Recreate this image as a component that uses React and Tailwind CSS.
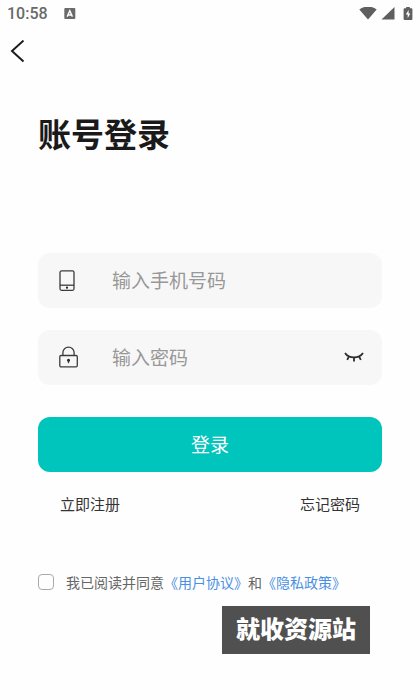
import { useState } from "react";

const StatusBar = () => (
  <div className="flex h-7 items-center justify-between px-[7px] text-[#6a6a6a]">
    <div className="flex items-center gap-4">
      <span className="font-['Roboto',sans-serif] text-base font-medium">
        10:58
      </span>
      <svg width="12" height="12" viewBox="0 0 12 12" aria-hidden="true">
        <rect x="0.3" y="0" width="11" height="11" rx="1" fill="currentColor" />
        <path
          d="M3.2 8.6 5.8 2.8 8.4 8.6M4.2 7H7.4"
          fill="none"
          stroke="#fff"
          strokeWidth="1.4"
        />
      </svg>
    </div>
    <div className="flex items-center gap-1" aria-hidden="true">
      <svg width="18" height="14" viewBox="0 0 18 14" fill="#5f5f5f">
        <path d="M9 12.5 0.3 2.4C2.6 0.6 5.7-0.4 9-0.4s6.4 1 8.7 2.8Z" />
      </svg>
      <svg width="14" height="14" viewBox="0 0 14 14" fill="#5f5f5f">
        <path d="M13.5 0V12.5H0.5Z" />
      </svg>
      <svg className="ml-1" width="10" height="14" viewBox="0 0 10 14">
        <path
          d="M3.2 0h3.6v1.2H8.4a1 1 0 0 1 1 1V12a1 1 0 0 1-1 1H1.6a1 1 0 0 1-1-1V2.2a1 1 0 0 1 1-1H3.2Z"
          fill="#5f5f5f"
        />
        <path d="M5.6 3 2.8 7.6H4.7V11.2L7.3 6.4H5.6Z" fill="#fff" />
      </svg>
    </div>
  </div>
);

const PhoneIcon = () => (
  <svg
    width="20"
    height="24"
    viewBox="0 0 20 24"
    fill="none"
    stroke="#3c3c3c"
    strokeWidth="1.3"
    aria-hidden="true"
  >
    <rect x="2" y="1.9" width="14" height="19.4" rx="1.5" />
    <path d="M2 16.2H16" />
    <circle cx="9" cy="18.7" r="1.1" fill="#222" stroke="none" />
  </svg>
);

const LockIcon = () => (
  <svg
    width="20"
    height="24"
    viewBox="0 0 20 24"
    fill="none"
    stroke="#3c3c3c"
    strokeWidth="1.3"
    aria-hidden="true"
  >
    <rect x="1.8" y="9.5" width="17.5" height="11.3" rx="1.2" />
    <path d="M4.9 9.5V6.4a5.6 5.2 0 0 1 11.2 0V9.5" />
    <circle cx="10.5" cy="14.2" r="1.5" fill="#222" stroke="none" />
    <path d="M10.5 14.2V17.2" strokeWidth="1.2" />
  </svg>
);

const ClosedEyeIcon = () => (
  <svg
    width="20"
    height="12"
    viewBox="0 0 20 12"
    fill="none"
    stroke="#2b2b2b"
    strokeWidth="1.8"
    aria-hidden="true"
  >
    <path d="M1 1C3 4 6.2 5.4 10 5.4S17 4 19 1" />
    <path d="M5 4.3 3.2 7.8M10 5.4V9.6M15 4.3l1.8 3.5" />
  </svg>
);

const App = () => {
  const [form, setForm] = useState({ phone: "", password: "" });
  const [showPassword, setShowPassword] = useState(false);
  const [agreed, setAgreed] = useState(false);

  const handleChange = (e) => {
    setForm({ ...form, [e.target.name]: e.target.value });
  };

  const handleSubmit = (e) => {
    e.preventDefault();
  };

  return (
    <div className="flex min-h-screen flex-col bg-[#fefefe] font-['Noto_Sans_CJK_SC',sans-serif]">
      <StatusBar />

      <header className="flex h-12 items-center px-2">
        <button type="button" aria-label="返回" className="cursor-pointer">
          <svg
            width="20"
            height="24"
            viewBox="0 0 20 24"
            fill="none"
            stroke="#1c1c1c"
            strokeWidth="2"
          >
            <path d="M15.5 0.6 4 11 15.5 21.4" />
          </svg>
        </button>
      </header>

      <main className="flex flex-col px-[38px] pt-8">
        <h1 className="text-[33px] leading-[50px] font-bold text-[#1a1a1a]">
          账号登录
        </h1>

        <form onSubmit={handleSubmit} className="mt-[95px] flex flex-col">
          <div className="flex flex-col gap-[22px]">
            <label className="flex h-[55px] items-center gap-[34px] rounded-xl bg-[#f7f7f7] px-5">
              <PhoneIcon />
              <input
                type="tel"
                name="phone"
                aria-label="手机号码"
                placeholder="输入手机号码"
                value={form.phone}
                onChange={handleChange}
                className="min-w-0 flex-1 text-[19px] text-[#222] outline-none placeholder:text-[#989898]"
              />
            </label>

            <div className="flex h-[55px] items-center rounded-xl bg-[#f7f7f7] pr-[18px] pl-5">
              <label className="flex min-w-0 flex-1 items-center gap-[34px]">
                <LockIcon />
                <input
                  type={showPassword ? "text" : "password"}
                  name="password"
                  aria-label="密码"
                  placeholder="输入密码"
                  value={form.password}
                  onChange={handleChange}
                  className="min-w-0 flex-1 text-[19px] text-[#222] outline-none placeholder:text-[#989898]"
                />
              </label>
              <button
                type="button"
                aria-label="显示密码"
                onClick={() => setShowPassword(!showPassword)}
                className="cursor-pointer"
              >
                <ClosedEyeIcon />
              </button>
            </div>
          </div>

          <button
            type="submit"
            className="mt-8 h-[55px] cursor-pointer rounded-xl bg-[#00c5bd] text-[19px] text-white"
          >
            登录
          </button>

          <div className="mt-5 flex justify-between px-[22px] text-[15px] leading-6 text-[#333]">
            <a href="#register">立即注册</a>
            <a href="#forgot">忘记密码</a>
          </div>

          <div className="mt-14 flex items-center gap-3 text-sm text-[#666]">
            <input
              id="agree"
              type="checkbox"
              checked={agreed}
              onChange={(e) => setAgreed(e.target.checked)}
              className="size-4 shrink-0 appearance-none rounded border border-[#aaa] checked:border-[#00c5bd] checked:bg-[#00c5bd]"
            />
            <p>
              <label htmlFor="agree">我已阅读并同意</label>
              <a href="#terms" className="text-[#4a90e2]">
                《用户协议》
              </a>
              和
              <a href="#privacy" className="text-[#4a90e2]">
                《隐私政策》
              </a>
            </p>
          </div>
        </form>
      </main>

      <div className="mt-3.5 mr-[50px] self-end bg-[#505050] px-3.5 pt-1 pb-2 text-2xl leading-9 font-black text-white">
        就收资源站
      </div>
    </div>
  );
};

export default App;
